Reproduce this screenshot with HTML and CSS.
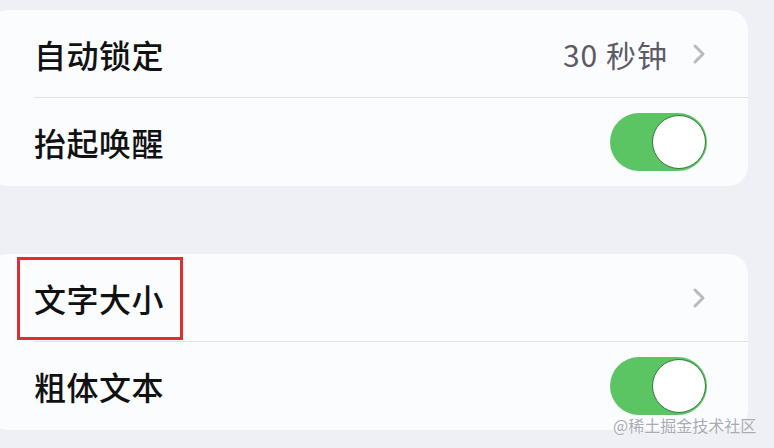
FILE: index.html
```html
<!DOCTYPE html>
<html lang="zh-CN">
<head>
<meta charset="UTF-8">
<meta name="viewport" content="width=device-width, initial-scale=1.0">
<title>显示与亮度</title>
<link rel="stylesheet" href="styles.css">
</head>
<body>

<div class="group">
  <div class="row">
    <div class="row-inner">
      <span class="label">自动锁定</span>
      <span class="value">30 秒钟</span>
      <svg class="chevron" width="14" height="22" viewBox="0 0 14 22"><path d="M3 3 L11 11 L3 19" fill="none" stroke="#b9b9bf" stroke-width="3" stroke-linecap="round" stroke-linejoin="round"/></svg>
    </div>
  </div>
  <div class="row">
    <div class="row-inner divided">
      <span class="label">抬起唤醒</span>
      <span class="switch on"><span class="knob"></span></span>
    </div>
  </div>
</div>

<div class="group second">
  <div class="row">
    <div class="row-inner">
      <span class="label">文字大小</span>
      <svg class="chevron" width="14" height="22" viewBox="0 0 14 22"><path d="M3 3 L11 11 L3 19" fill="none" stroke="#b9b9bf" stroke-width="3" stroke-linecap="round" stroke-linejoin="round"/></svg>
    </div>
    <span class="highlight"></span>
  </div>
  <div class="row">
    <div class="row-inner divided">
      <span class="label">粗体文本</span>
      <span class="switch on"><span class="knob"></span></span>
    </div>
  </div>
</div>

<div class="watermark">@稀土掘金技术社区</div>

</body>
</html>
```

FILE: styles.css
```css
body {
  margin: 0;
  padding: 10px 0 0;
  width: 774px;
  height: 448px;
  overflow: hidden;
  background-color: #eef0f5;
  font-family: "Noto Sans CJK SC", "Noto Sans", sans-serif;
  position: relative;
}

.group {
  margin: 0 26px 0 -12px;
  background-color: #fbfcfe;
  border-radius: 20px;
}

.group.second {
  margin-top: 68px;
}

.row {
  position: relative;
  padding-left: 46px;
}

.row-inner {
  display: flex;
  align-items: center;
  height: 87px;
  padding-right: 42px;
}

.row-inner.divided {
  border-top: 1px solid #dfe1e5;
  height: 88px;
}

.label {
  flex: 1;
  font-size: 32px;
  font-weight: 500;
  color: #111;
  letter-spacing: 0.5px;
}

.value {
  font-size: 30px;
  color: #5b5a66;
  margin-right: 24px;
  letter-spacing: 1px;
}

.chevron {
  display: block;
}

.switch {
  display: flex;
  justify-content: flex-end;
  align-items: center;
  width: 97px;
  height: 58px;
  border-radius: 29px;
  background-color: #5bc463;
  box-sizing: border-box;
  padding: 1px;
  margin-right: -1px;
}

.knob {
  width: 54px;
  height: 54px;
  border-radius: 50%;
  background-color: #fff;
  border: 1.5px solid #2f7a36;
  box-sizing: border-box;
}

.highlight {
  position: absolute;
  left: 29px;
  top: 3px;
  width: 166px;
  height: 83px;
  border: 3px solid #e32d2d;
  box-sizing: border-box;
}

.watermark {
  position: absolute;
  left: 613px;
  top: 413px;
  font-size: 16px;
  color: #a9abb3;
  text-shadow: 0 0 2px #fff;
}
```
